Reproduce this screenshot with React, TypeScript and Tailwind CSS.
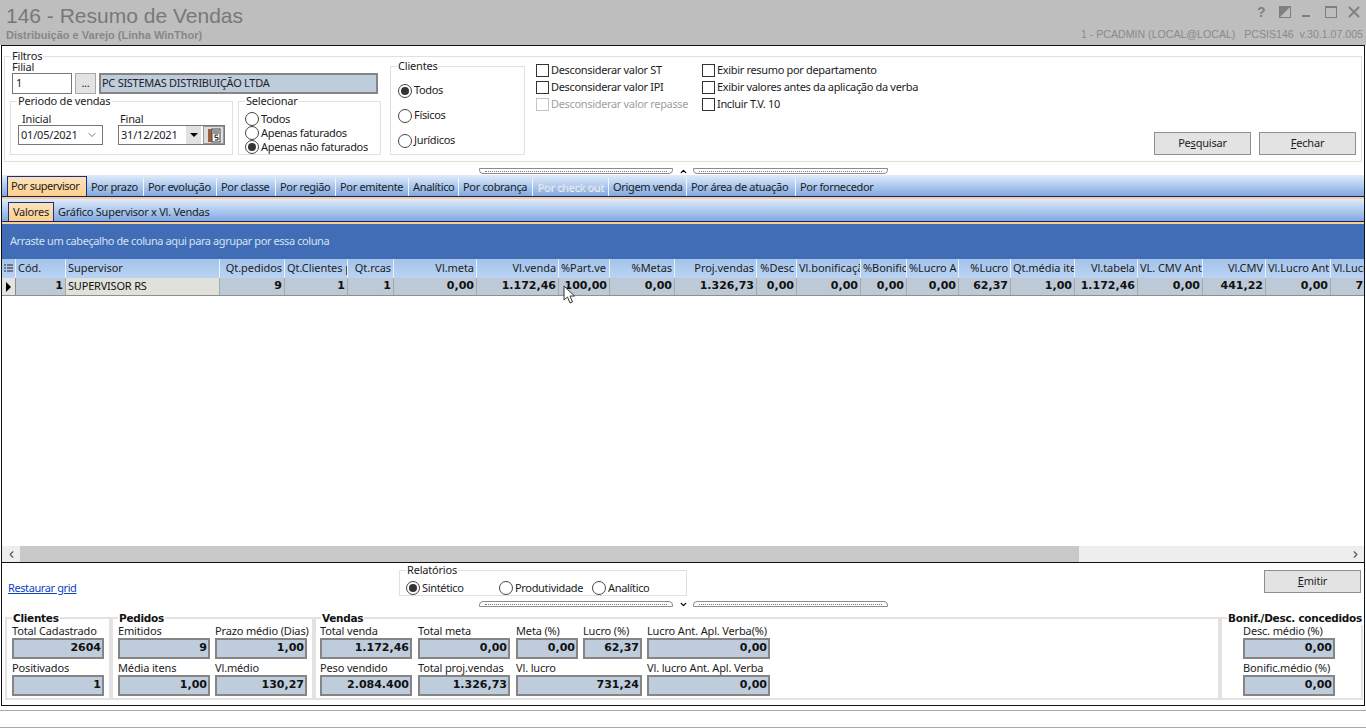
import React from 'react';
import { ChevronDown, ChevronUp, ChevronLeft, ChevronRight } from 'lucide-react';

const tabs = [
  { label: 'Por prazo', w: 57 },
  { label: 'Por evolução', w: 73 },
  { label: 'Por classe', w: 59 },
  { label: 'Por região', w: 60 },
  { label: 'Por emitente', w: 73 },
  { label: 'Analítico', w: 50 },
  { label: 'Por cobrança', w: 74 },
  { label: 'Por check out', w: 76, disabled: true },
  { label: 'Origem venda', w: 78 },
  { label: 'Por área de atuação', w: 109 },
  { label: 'Por fornecedor', w: 100, last: true },
];

const columns = [
  { h: 'Cód.', v: '1', w: 50, left: true },
  { h: 'Supervisor', v: 'SUPERVISOR RS', w: 154, left: true },
  { h: 'Qt.pedidos', v: '9', w: 65 },
  { h: 'Qt.Clientes p', v: '1', w: 63, left: true },
  { h: 'Qt.rcas', v: '1', w: 46 },
  { h: 'Vl.meta', v: '0,00', w: 83 },
  { h: 'Vl.venda', v: '1.172,46', w: 82 },
  { h: '%Part.ve', v: '100,00', w: 51, left: true },
  { h: '%Metas', v: '0,00', w: 65 },
  { h: 'Proj.vendas', v: '1.326,73', w: 82 },
  { h: '%Desc', v: '0,00', w: 40 },
  { h: 'Vl.bonificação', v: '0,00', w: 64, left: true },
  { h: '%Bonific', v: '0,00', w: 46, left: true },
  { h: '%Lucro A', v: '0,00', w: 52, left: true },
  { h: '%Lucro', v: '62,37', w: 52 },
  { h: 'Qt.média ite', v: '1,00', w: 64, left: true },
  { h: 'Vl.tabela', v: '1.172,46', w: 63 },
  { h: 'VL. CMV Ant', v: '0,00', w: 65, left: true },
  { h: 'Vl.CMV', v: '441,22', w: 63 },
  { h: 'Vl.Lucro Ant', v: '0,00', w: 65, left: true },
  { h: 'Vl.Lucro', v: '731,24', w: 70, left: true },
];

const Radio = ({ checked = false, label, className = '' }: { checked?: boolean; label: string; className?: string }) => (
  <div className={`flex items-center gap-[2px] whitespace-nowrap tracking-[-0.33px] ${className}`}>
    <span className="flex h-[14px] w-[14px] shrink-0 items-center justify-center rounded-full border border-[#444] bg-white">
      {checked && <span className="h-[8px] w-[8px] rounded-full bg-[#333]" />}
    </span>
    {label}
  </div>
);

const Check = ({ label, disabled = false }: { label: string; disabled?: boolean }) => (
  <div className={`flex h-[17px] items-center gap-[2px] whitespace-nowrap tracking-[-0.33px] ${disabled ? 'text-[#a0a0a0]' : ''}`}>
    <span className={`h-[13px] w-[13px] shrink-0 border bg-white ${disabled ? 'border-[#c4c4c4]' : 'border-[#333]'}`} />
    {label}
  </div>
);

const GroupBox = ({ title, className = '', children }: { title: string; className?: string; children?: React.ReactNode }) => (
  <div className={`relative border border-[#e0e0e0] ${className}`}>
    <span className="absolute left-[6px] top-[-8px] bg-white px-px leading-[13px]">{title}</span>
    {children}
  </div>
);

const Splitter = ({ up = false }: { up?: boolean }) => {
  const corner = up ? 'rounded-b-[4px]' : 'rounded-t-[4px]';
  return (
    <div className="flex h-[8px] w-[409px] items-center">
      <div className={`flex h-[6px] w-[194px] items-center border border-[#8c8c8c] px-[5px] ${corner}`}>
        <div className="h-0 w-full border-t border-dotted border-[#777]" />
      </div>
      <div className="flex w-[20px] justify-center text-black">
        {up ? <ChevronUp size={9} strokeWidth={3.5} /> : <ChevronDown size={9} strokeWidth={3.5} />}
      </div>
      <div className={`flex h-[6px] w-[195px] items-center border border-[#8c8c8c] px-[5px] ${corner}`}>
        <div className="h-0 w-full border-t border-dotted border-[#777]" />
      </div>
    </div>
  );
};

const Button = ({ children, className = '' }: { children: React.ReactNode; className?: string }) => (
  <div className={`flex h-[23px] w-[97px] items-center justify-center border border-[#8f8f8f] bg-[#e3e3e3] ${className}`}>{children}</div>
);

const Field = ({ label, value, w, className = '' }: { label: string; value: string; w: number; className?: string }) => (
  <div className={`shrink-0 ${className}`} style={{ width: w }}>
    <div className="h-[13px] whitespace-nowrap leading-[13px] tracking-[-0.15px]">{label}</div>
    <div className="mt-[1px] flex h-[21px] items-center justify-end border-2 border-[#858585] bg-[#bfccdc] pr-[1px] font-['DejaVu_Sans',sans-serif] text-[11px] font-bold tracking-normal text-[#111]">
      {value}
    </div>
  </div>
);

const BottomGroup = ({ title, className = '', children }: { title: string; className?: string; children?: React.ReactNode }) => (
  <div className={`relative h-full shrink-0 border-2 border-[#e2e2e2] ${className}`}>
    <span className="absolute left-[5px] top-[-7px] whitespace-nowrap bg-white px-px font-['DejaVu_Sans',sans-serif] text-[10.5px] font-bold leading-[13px] tracking-[-0.28px] text-[#111]">{title}</span>
    {children}
  </div>
);

export default function App() {
  return (
    <div className="relative flex h-[728px] w-[1366px] flex-col overflow-hidden bg-white font-['Noto_Sans',sans-serif] text-[11px] tracking-[-0.2px] text-[#1c1c1c]">
      {/* title bar */}
      <div className="relative h-[45px] shrink-0 bg-[#bebebe] tracking-normal">
        <div className="pl-[6px] pt-[3px] font-['Liberation_Sans',sans-serif] text-[21px] leading-[26px] text-[#787878]">146 - Resumo de Vendas</div>
        <div className="pl-[6px] font-['Liberation_Sans',sans-serif] text-[11px] font-bold leading-[13px] text-[#878787]">Distribuição e Varejo (Linha WinThor)</div>
        <div className="absolute left-[1257px] top-[5px] flex items-center text-[#7f7f7f]">
          <span className="w-[22px] font-['Liberation_Sans',sans-serif] text-[14px] font-bold leading-[14px]">?</span>
          <svg className="mr-[11px]" width="12" height="12" viewBox="0 0 12 12"><rect x="0.5" y="0.5" width="11" height="11" fill="none" stroke="#7f7f7f" /><path d="M0 0 H12 L0 12 Z" fill="#7f7f7f" /></svg>
          <svg className="mr-[15px]" width="8" height="12" viewBox="0 0 8 12"><rect x="0" y="9" width="8" height="2" fill="#7f7f7f" /></svg>
          <svg className="mr-[11px]" width="12" height="12" viewBox="0 0 12 12"><rect x="0.5" y="1" width="11" height="10.5" fill="none" stroke="#7f7f7f" /><rect x="0" y="0" width="12" height="2" fill="#7f7f7f" /></svg>
          <svg width="12" height="12" viewBox="0 0 12 12"><path d="M1 1 L11 11 M11 1 L1 11" stroke="#7f7f7f" strokeWidth="1.8" /></svg>
        </div>
        <div className="absolute right-[3px] top-[28px] whitespace-pre font-['Liberation_Sans',sans-serif] text-[10.6px] leading-[13px] text-[#8a8a8a]">1 - PCADMIN (LOCAL@LOCAL)   PCSIS146  v.30.1.07.005</div>
      </div>

      {/* main frame */}
      <div className="mx-[1px] flex h-[661px] shrink-0 flex-col border border-[#111] bg-white">
        {/* filtros */}
        <div className="h-[121px] shrink-0 px-[2px] pt-[10px]">
          <GroupBox title="Filtros" className="flex h-[106px] w-[1358px]">
            <div className="ml-[5px] w-[371px] shrink-0 pt-[4px]">
              <div className="ml-[2px] h-[12px] leading-[12px]">Filial</div>
              <div className="ml-[2px] flex h-[21px] items-stretch">
                <div className="flex w-[60px] items-center border border-[#777] pl-[3px]">1</div>
                <div className="ml-[3px] flex w-[21px] items-center justify-center border border-[#a9a9a9] bg-[#e3e3e3]">...</div>
                <div className="ml-[3px] flex w-[279px] items-center border-2 border-[#858585] bg-[#bfccdc] pl-px tracking-[-0.28px] text-[#222]">PC SISTEMAS DISTRIBUIÇÃO LTDA</div>
              </div>
              <div className="mt-[7px] flex h-[54px]">
                <GroupBox title="Periodo de vendas" className="w-[223px] shrink-0">
                  <div className="flex pl-[7px] pt-[10px]">
                    <div className="w-[100px]">
                      <div className="ml-[4px] h-[13px] leading-[13px]">Inicial</div>
                      <div className="flex h-[20px] w-[85px] items-center justify-between border border-[#777] pl-[2px] pr-[4px]">
                        01/05/2021 <ChevronDown size={12} strokeWidth={1.2} />
                      </div>
                    </div>
                    <div>
                      <div className="ml-[2px] h-[13px] leading-[13px]">Final</div>
                      <div className="flex h-[20px] w-[107px] items-center border border-[#777] pl-[2px]">
                        <span className="w-[65px]">31/12/2021</span>
                        <span className="flex h-[18px] w-[15px] items-center justify-center bg-[#e1e1e1]">
                          <span className="h-0 w-0 border-x-[4px] border-t-[4px] border-x-transparent border-t-black" />
                        </span>
                        <span className="ml-[2px] flex h-[18px] w-[21px] items-center justify-center border border-[#999] bg-[#dedede]">
                          <svg width="14" height="15" viewBox="0 0 14 15">
                            <rect x="1" y="1" width="4" height="13" fill="#9a5f38" />
                            <rect x="5" y="1" width="8" height="13" fill="#f4f4f4" stroke="#444" strokeWidth="1" />
                            <path d="M6 3 H12 M6 5 H12" stroke="#333" strokeWidth="1" />
                            <path d="M11 7 H8 V9.5 H11 V12 H8" fill="none" stroke="#222" strokeWidth="1" />
                          </svg>
                        </span>
                      </div>
                    </div>
                  </div>
                </GroupBox>
                <GroupBox title="Selecionar" className="ml-[5px] w-[143px] shrink-0">
                  <div className="pl-[6px] pt-[10px] leading-[14px]">
                    <Radio label="Todos" />
                    <Radio label="Apenas faturados" />
                    <Radio checked label="Apenas não faturados" />
                  </div>
                </GroupBox>
              </div>
            </div>
            <GroupBox title="Clientes" className="ml-[9px] mt-[9px] h-[89px] w-[135px] shrink-0">
              <div className="pl-[7px] pt-[11px]">
                <Radio checked label="Todos" className="h-[25px]" />
                <Radio label="Físicos" className="h-[25px]" />
                <Radio label="Jurídicos" className="h-[25px]" />
              </div>
            </GroupBox>
            <div className="ml-[11px] w-[166px] shrink-0 pt-[5px]">
              <Check label="Desconsiderar valor ST" />
              <Check label="Desconsiderar valor IPI" />
              <Check disabled label="Desconsiderar valor repasse" />
            </div>
            <div className="shrink-0 pt-[5px]">
              <Check label="Exibir resumo por departamento" />
              <Check label="Exibir valores antes da aplicação da verba" />
              <Check label="Incluir T.V. 10" />
            </div>
            <div className="ml-auto mb-[6px] mr-[5px] flex gap-[8px] self-end">
              <Button><span>Pe<u>s</u>quisar</span></Button>
              <Button><span><u>F</u>echar</span></Button>
            </div>
          </GroupBox>
        </div>

        <div className="ml-[477px] shrink-0"><Splitter up /></div>

        {/* abas */}
        <div className="flex h-[21px] shrink-0 items-end bg-gradient-to-b from-[#e0ecfb] to-[#80a9e0] pl-[5px] tracking-[-0.33px]">
          <div className="flex h-[20px] w-[80px] shrink-0 items-center border border-b-0 border-[#1d2f7a] bg-gradient-to-b from-[#fbe3bd] to-[#fccf8d] pl-[3px] tracking-[-0.5px]">Por supervisor</div>
          {tabs.map((t) => (
            <div key={t.label} className={`flex h-[18px] shrink-0 items-center whitespace-nowrap pl-[4px] ${t.last ? '' : 'border-r border-[#f2f6fc]'} ${t.disabled ? 'text-[#c9d1dc] [text-shadow:1px_1px_0_#eef2f8]' : ''}`} style={{ width: t.w }}>
              {t.label}
            </div>
          ))}
        </div>
        <div className="h-[1px] shrink-0 bg-[#16206e]" />
        <div className="h-[2px] shrink-0 bg-[#f9cf93]" />
        <div className="flex h-[22px] shrink-0 items-end bg-gradient-to-b from-[#e0ecfb] to-[#80a9e0] pl-[6px] tracking-[-0.26px]">
          <div className="flex h-[19px] w-[46px] items-center justify-center border border-b-0 border-[#1d2f7a] bg-gradient-to-b from-[#fbe3bd] to-[#fccf8d]">Valores</div>
          <div className="flex h-[18px] items-center pl-[4px]">Gráfico Supervisor x Vl. Vendas</div>
        </div>
        <div className="h-[1px] shrink-0 bg-[#16206e]" />
        <div className="h-[2px] shrink-0 bg-[#f9cf93]" />

        {/* area de agrupamento */}
        <div className="flex h-[35px] shrink-0 items-center bg-[#406db5] pl-[8px] tracking-[-0.42px] text-[#d5e2f4]">Arraste um cabeçalho de coluna aqui para agrupar por essa coluna</div>

        {/* grid */}
        <div className="flex h-[19px] shrink-0 overflow-hidden bg-gradient-to-b from-[#a4c3ea] to-[#b9d3f3] tracking-[-0.05px]">
          <div className="flex w-[14px] shrink-0 items-center justify-center border-r border-[#e8f0fb]">
            <svg width="9" height="9" viewBox="0 0 9 9"><path d="M0 1 H2 M3 1 H9 M0 4 H2 M3 4 H9 M0 7 H2 M3 7 H9" stroke="#222" strokeWidth="1" /></svg>
          </div>
          {columns.map((c) => (
            <div key={c.h} className={`flex shrink-0 items-center overflow-hidden whitespace-nowrap border-r border-[#e8f0fb] px-[2px] ${c.left ? 'justify-start' : 'justify-end'}`} style={{ width: c.w }}>
              {c.h}
            </div>
          ))}
        </div>
        <div className="flex h-[18px] shrink-0 overflow-hidden border-b border-[#8f8f8f] bg-[#bdc9d6] font-['DejaVu_Sans',sans-serif] text-[11px] font-bold tracking-normal text-[#111]">
          <div className="flex w-[14px] shrink-0 items-center justify-center border-r border-[#888] bg-[#e3e3e3]">
            <svg width="7" height="10" viewBox="0 0 7 10"><path d="M1 0 L6 5 L1 10 Z" fill="#000" /></svg>
          </div>
          {columns.map((c) =>
            c.h === 'Supervisor' ? (
              <div key={c.h} className="flex shrink-0 items-center border-r border-[#a8a8a8] bg-[#e1e1dc] pl-[2px] font-['Noto_Sans',sans-serif] text-[11px] font-normal tracking-[-0.2px]" style={{ width: c.w }}>
                {c.v}
              </div>
            ) : (
              <div key={c.h} className="flex shrink-0 items-center justify-end overflow-hidden whitespace-nowrap border-r border-[#a8a8a8] pr-[2px]" style={{ width: c.w }}>
                {c.v}
              </div>
            )
          )}
        </div>
        <div className="flex-1 bg-white" />

        {/* scrollbar */}
        <div className="flex h-[16px] shrink-0 items-center bg-[#eeeeee] text-[#555]">
          <div className="flex w-[18px] shrink-0 justify-center"><ChevronLeft size={11} strokeWidth={2.5} /></div>
          <div className="h-full w-[1059px] shrink-0 bg-[#c9c9c9]" />
          <div className="ml-auto flex w-[18px] shrink-0 justify-center"><ChevronRight size={11} strokeWidth={2.5} /></div>
        </div>
        <div className="h-[1px] shrink-0 bg-[#111]" />

        {/* rodape */}
        <div className="h-[142px] shrink-0">
          <div className="flex h-[37px] items-start pt-[7px]">
            <div className="ml-[6px] w-[391px] shrink-0 pt-[11px] leading-[14px] tracking-[-0.4px] text-[#0b3fc4] underline">Restaurar grid</div>
            <GroupBox title="Relatórios" className="h-[26px] w-[288px] shrink-0">
              <div className="flex pl-[6px] pt-[10px] leading-[14px]">
                <Radio checked label="Sintético" className="w-[93px]" />
                <Radio label="Produtividade" className="w-[93px]" />
                <Radio label="Analítico" />
              </div>
            </GroupBox>
            <Button className="ml-auto mr-[3px]"><span><u>E</u>mitir</span></Button>
          </div>
          <div className="ml-[477px]"><Splitter /></div>
          <div className="ml-[3px] mt-[9px] flex h-[83px] w-[1358px]">
            <BottomGroup title="Clientes" className="w-[106px]">
              <div className="pl-[5px] pt-[5px]">
                <Field label="Total Cadastrado" value="2604" w={92} />
                <Field label="Positivados" value="1" w={92} className="mt-[2px]" />
              </div>
            </BottomGroup>
            <BottomGroup title="Pedidos" className="w-[203px]">
              <div className="grid grid-cols-[92px_92px] gap-x-[5px] gap-y-[2px] pl-[5px] pt-[5px]">
                <Field label="Emitidos" value="9" w={92} />
                <Field label="Prazo médio (Dias)" value="1,00" w={92} />
                <Field label="Média itens" value="1,00" w={92} />
                <Field label="Vl.médio" value="130,27" w={92} />
              </div>
            </BottomGroup>
            <BottomGroup title="Vendas" className="w-[906px]">
              <div className="pl-[4px] pt-[5px]">
                <div className="flex">
                  <Field label="Total venda" value="1.172,46" w={92} />
                  <Field label="Total meta" value="0,00" w={92} className="ml-[6px]" />
                  <Field label="Meta (%)" value="0,00" w={62} className="ml-[6px]" />
                  <Field label="Lucro (%)" value="62,37" w={59} className="ml-[5px]" />
                  <Field label="Lucro Ant. Apl. Verba(%)" value="0,00" w={123} className="ml-[5px]" />
                </div>
                <div className="mt-[2px] flex">
                  <Field label="Peso vendido" value="2.084.400" w={92} />
                  <Field label="Total proj.vendas" value="1.326,73" w={92} className="ml-[6px]" />
                  <Field label="Vl. lucro" value="731,24" w={126} className="ml-[6px]" />
                  <Field label="Vl. lucro Ant. Apl. Verba" value="0,00" w={123} className="ml-[5px]" />
                </div>
              </div>
            </BottomGroup>
            <BottomGroup title="Bonif./Desc. concedidos" className="w-[143px]">
              <div className="pl-[21px] pt-[5px]">
                <Field label="Desc. médio (%)" value="0,00" w={92} />
                <Field label="Bonific.médio (%)" value="0,00" w={92} className="mt-[2px]" />
              </div>
            </BottomGroup>
          </div>
        </div>
      </div>

      {/* barra de status */}
      <div className="mt-[4px] h-[18px] shrink-0 border-y border-[#a8a8a8]" />

      {/* ponteiro do mouse */}
      <svg className="absolute left-[563px] top-[285px]" width="14" height="20" viewBox="0 0 14 20">
        <path d="M1 1 V15 L4.5 12 L7 18 L9.5 17 L7 11 H11.5 Z" fill="#fff" stroke="#333" strokeWidth="1" />
      </svg>
    </div>
  );
}
